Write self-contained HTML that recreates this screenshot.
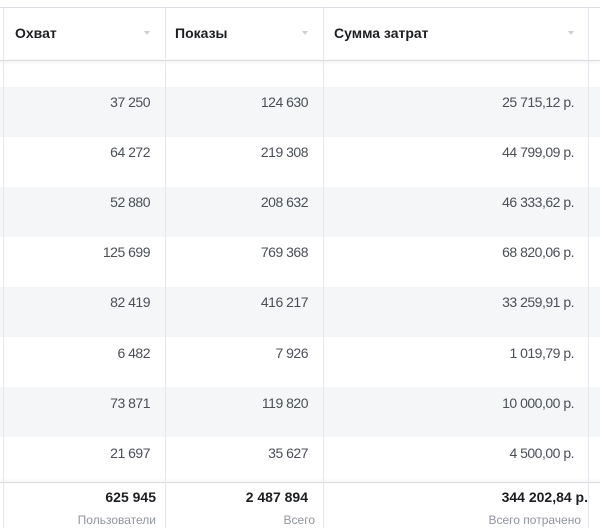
<!DOCTYPE html><html><head><style>
body{margin:0;width:600px;height:528px;overflow:hidden;background:#fff;font-family:"Liberation Sans",Arial,sans-serif;position:relative;color:#1c1e21}
.v{position:absolute;top:7px;bottom:0;width:1px;background:#e4e6eb}
.row{position:absolute;left:0;width:600px;height:50px}
.g{background:#f5f6f7}
.c{position:absolute;font-size:14px;text-align:right;color:#4b4f56;letter-spacing:-0.5px}
.h{position:absolute;top:25px;font-size:14px;font-weight:bold;color:#1c1e21}
.ar{position:absolute;top:31px;width:0;height:0;border-left:3.5px solid transparent;border-right:3.5px solid transparent;border-top:4px solid #ccd0d5}
.t{position:absolute;font-size:14px;font-weight:bold;text-align:right}
.s{position:absolute;font-size:12px;color:#90949c;text-align:right}
</style></head><body>
<div style="position:absolute;top:7px;left:0;width:600px;height:1px;background:#dadde1"></div>
<div class="row g" style="top:87px"></div>
<div class="row g" style="top:187px"></div>
<div class="row g" style="top:287px"></div>
<div class="row g" style="top:387px"></div>
<div style="position:absolute;top:60px;left:0;width:600px;height:1px;background:#dadde1;box-shadow:0 1px 3px rgba(0,0,0,.15)"></div>
<div style="position:absolute;top:482px;left:0;width:600px;height:1px;background:#dadde1;box-shadow:0 -1px 3px rgba(0,0,0,.12)"></div>
<div class="v" style="left:3px"></div><div class="v" style="left:165px"></div><div class="v" style="left:323px"></div><div class="v" style="left:588px"></div>
<div class="h" style="left:15px">Охват</div><div class="ar" style="left:144px"></div>
<div class="h" style="left:175px">Показы</div><div class="ar" style="left:302px"></div>
<div class="h" style="left:334px">Сумма затрат</div><div class="ar" style="left:568px"></div>
<div id="d"></div>
<script>
var r=[["37 250","124 630","25 715,12 р."],["64 272","219 308","44 799,09 р."],["52 880","208 632","46 333,62 р."],["125 699","769 368","68 820,06 р."],["82 419","416 217","33 259,91 р."],["6 482","7 926","1 019,79 р."],["73 871","119 820","10 000,00 р."],["21 697","35 627","4 500,00 р."]];
var h="";r.forEach(function(x,i){var y=94+i*50.1;h+='<div class="c" style="top:'+y+'px;right:450px">'+x[0]+'</div><div class="c" style="top:'+y+'px;right:292px">'+x[1]+'</div><div class="c" style="top:'+y+'px;right:26px">'+x[2]+'</div>';});
document.getElementById("d").innerHTML=h;
</script>
<div class="t" style="top:489px;right:444px">625 945</div>
<div class="t" style="top:489px;right:292px">2 487 894</div>
<div class="t" style="top:489px;right:12px">344 202,84 р.</div>
<div class="s" style="top:513px;right:444px">Пользователи</div>
<div class="s" style="top:513px;right:285px">Всего</div>
<div class="s" style="top:513px;right:19px">Всего потрачено</div>
</body></html>
